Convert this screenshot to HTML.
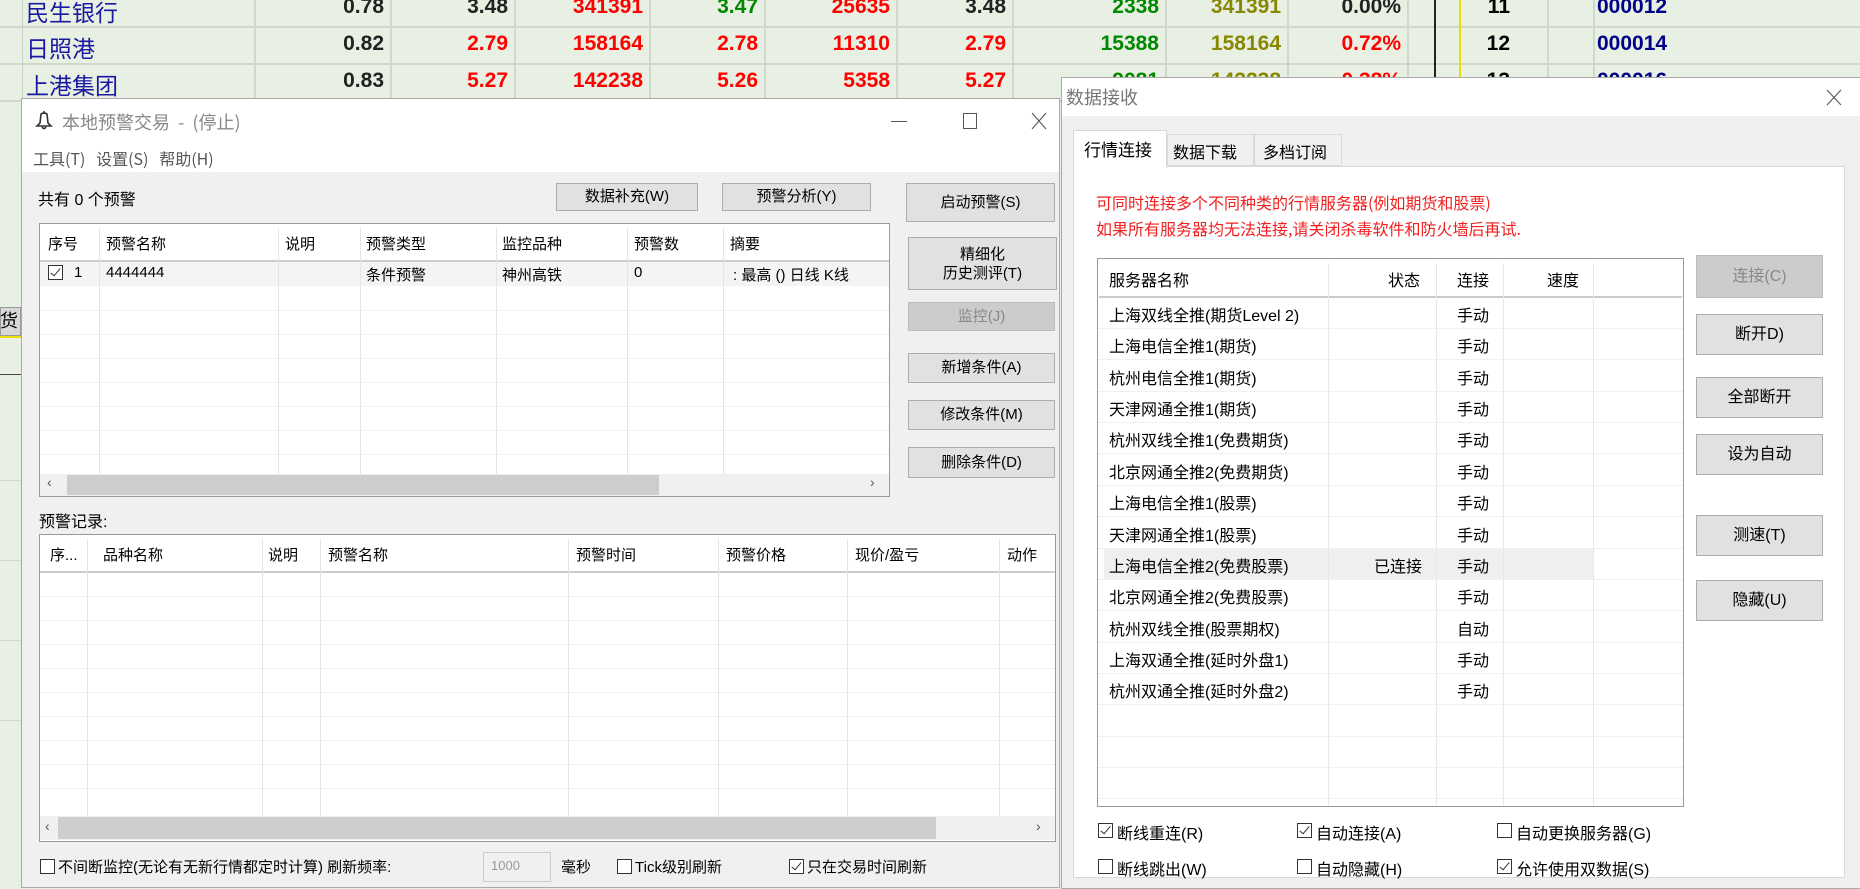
<!DOCTYPE html>
<html><head><meta charset="utf-8">
<style>
*{margin:0;padding:0;box-sizing:border-box}
body{width:1860px;height:886px;overflow:hidden;position:relative;background:#e8f0e4;font-family:"Liberation Sans","Microsoft YaHei","Noto Sans CJK SC",sans-serif}
.a{position:absolute}
.t{position:absolute;white-space:nowrap}
.num{font-family:"Liberation Sans Narrow","Liberation Sans",sans-serif;font-weight:bold;font-size:21px;text-align:right}
.btn{position:absolute;background:#e1e1e1;border:1px solid #adadad;text-align:center;color:#000}
.cb{position:absolute;width:15px;height:15px;border:1px solid #333;background:#fff}
.cb.on::after{content:"";position:absolute;left:4px;top:0px;width:4px;height:9px;border-right:1.5px solid #333;border-bottom:1.5px solid #333;transform:rotate(40deg)}
.vl{position:absolute;width:1px;background:#f0f0f0}
.hl{position:absolute;height:1px;background:#f0f0f0}
.L{font-family:"Liberation Sans","Noto Sans CJK SC",sans-serif;font-size:15px}
</style></head><body>

<!-- background stock table -->
<div class="a" style="left:0;top:26px;width:1860px;height:2px;background:#d0d8cc"></div>
<div class="a" style="left:0;top:63px;width:1860px;height:2px;background:#d0d8cc"></div>
<div class="a" style="left:0;top:100px;width:1860px;height:2px;background:#d0d8cc"></div>
<div class="a" style="left:22px;top:0;width:1px;height:100px;background:#c8d0c4"></div>
<div class="a" style="left:254px;top:0;width:2px;height:100px;background:#d0d8cc"></div>
<div class="a" style="left:390px;top:0;width:2px;height:100px;background:#d0d8cc"></div>
<div class="a" style="left:514px;top:0;width:2px;height:100px;background:#d0d8cc"></div>
<div class="a" style="left:649px;top:0;width:2px;height:100px;background:#d0d8cc"></div>
<div class="a" style="left:764px;top:0;width:2px;height:100px;background:#d0d8cc"></div>
<div class="a" style="left:896px;top:0;width:2px;height:100px;background:#d0d8cc"></div>
<div class="a" style="left:1012px;top:0;width:2px;height:100px;background:#d0d8cc"></div>
<div class="a" style="left:1165px;top:0;width:2px;height:100px;background:#d0d8cc"></div>
<div class="a" style="left:1287px;top:0;width:2px;height:100px;background:#d0d8cc"></div>
<div class="a" style="left:1407px;top:0;width:2px;height:100px;background:#d0d8cc"></div>
<div class="a" style="left:1434px;top:0;width:2px;height:100px;background:#222"></div>
<div class="a" style="left:1459px;top:0;width:2px;height:100px;background:#e8e000"></div>
<div class="a" style="left:1547px;top:0;width:2px;height:100px;background:#d0d8cc"></div>
<div class="a" style="left:1593px;top:0;width:2px;height:100px;background:#d0d8cc"></div>

<div class="t" style="left:26px;top:-6px;font-size:23px;color:#1a1aa0;font-family:'Noto Sans CJK SC',sans-serif">民生银行</div>
<div class="t" style="left:26px;top:30px;font-size:23px;color:#1a1aa0;font-family:'Noto Sans CJK SC',sans-serif">日照港</div>
<div class="t" style="left:26px;top:67px;font-size:23px;color:#1a1aa0;font-family:'Noto Sans CJK SC',sans-serif">上港集团</div>

<div class="t num" style="left:300px;top:-5px;width:84px;color:#222">0.78</div>
<div class="t num" style="left:420px;top:-5px;width:88px;color:#222">3.48</div>
<div class="t num" style="left:540px;top:-5px;width:103px;color:#f00">341391</div>
<div class="t num" style="left:660px;top:-5px;width:98px;color:#080">3.47</div>
<div class="t num" style="left:780px;top:-5px;width:110px;color:#f00">25635</div>
<div class="t num" style="left:910px;top:-5px;width:96px;color:#222">3.48</div>
<div class="t num" style="left:1040px;top:-5px;width:119px;color:#080">2338</div>
<div class="t num" style="left:1170px;top:-5px;width:111px;color:#880">341391</div>
<div class="t num" style="left:1290px;top:-5px;width:111px;color:#222">0.00%</div>
<div class="t num" style="left:1470px;top:-5px;width:40px;color:#000">11</div>
<div class="t num" style="left:1597px;top:-5px;text-align:left;color:#008">000012</div>

<div class="t num" style="left:300px;top:32px;width:84px;color:#222">0.82</div>
<div class="t num" style="left:420px;top:32px;width:88px;color:#f00">2.79</div>
<div class="t num" style="left:540px;top:32px;width:103px;color:#f00">158164</div>
<div class="t num" style="left:660px;top:32px;width:98px;color:#f00">2.78</div>
<div class="t num" style="left:780px;top:32px;width:110px;color:#f00">11310</div>
<div class="t num" style="left:910px;top:32px;width:96px;color:#f00">2.79</div>
<div class="t num" style="left:1040px;top:32px;width:119px;color:#080">15388</div>
<div class="t num" style="left:1170px;top:32px;width:111px;color:#880">158164</div>
<div class="t num" style="left:1290px;top:32px;width:111px;color:#f00">0.72%</div>
<div class="t num" style="left:1470px;top:32px;width:40px;color:#000">12</div>
<div class="t num" style="left:1597px;top:32px;text-align:left;color:#008">000014</div>

<div class="t num" style="left:300px;top:69px;width:84px;color:#222">0.83</div>
<div class="t num" style="left:420px;top:69px;width:88px;color:#f00">5.27</div>
<div class="t num" style="left:540px;top:69px;width:103px;color:#f00">142238</div>
<div class="t num" style="left:660px;top:69px;width:98px;color:#f00">5.26</div>
<div class="t num" style="left:780px;top:69px;width:110px;color:#f00">5358</div>
<div class="t num" style="left:910px;top:69px;width:96px;color:#f00">5.27</div>
<div class="t num" style="left:1040px;top:69px;width:119px;color:#080">9081</div>
<div class="t num" style="left:1170px;top:69px;width:111px;color:#880">142238</div>
<div class="t num" style="left:1290px;top:69px;width:111px;color:#f00">0.38%</div>
<div class="t num" style="left:1470px;top:69px;width:40px;color:#000">13</div>
<div class="t num" style="left:1597px;top:69px;text-align:left;color:#008">000016</div>

<!-- left edge bits -->
<div class="a" style="left:0;top:307px;width:21px;height:29px;background:#d8d8d8;border:1px solid #999"></div>
<div class="t" style="left:0;top:307px;font-size:18px;color:#000;font-family:'Noto Sans CJK SC',sans-serif">货</div>
<div class="a" style="left:0;top:336px;width:21px;height:2px;background:#e8e000"></div>
<div class="a" style="left:0;top:374px;width:21px;height:1px;background:#444"></div>
<div class="a" style="left:0;top:480px;width:21px;height:1px;background:#d0d8cc"></div>
<div class="a" style="left:0;top:560px;width:21px;height:1px;background:#d0d8cc"></div>
<div class="a" style="left:0;top:640px;width:21px;height:1px;background:#d0d8cc"></div>
<div class="a" style="left:0;top:720px;width:21px;height:1px;background:#d0d8cc"></div>

<!-- LEFT WINDOW -->
<div class="a" style="left:21px;top:98px;width:1039px;height:790px;background:#f0f0f0;border:1px solid #aaa"></div>
<div class="a" style="left:22px;top:99px;width:1037px;height:73px;background:#fff"></div>
<svg class="a" style="left:35px;top:110px" width="18" height="20" viewBox="0 0 18 20"><path d="M9 1 L9 3 M6 4 Q9 2 12 4 L13 13 L16 16 L2 16 L5 13 Z M7 17 Q9 20 11 17" fill="none" stroke="#333" stroke-width="1.6"/></svg>
<div class="t" style="left:62px;top:109px;font-size:18px;color:#888;font-family:'Noto Sans CJK SC',sans-serif">本地预警交易 &nbsp;- &nbsp;(停止)</div>
<div class="a" style="left:891px;top:121px;width:16px;height:1px;background:#555"></div>
<div class="a" style="left:963px;top:113px;width:14px;height:16px;border:1px solid #555"></div>
<svg class="a" style="left:1031px;top:112px" width="16" height="18"><path d="M1 1 L15 17 M15 1 L1 17" stroke="#555" stroke-width="1.1"/></svg>
<div class="t" style="left:33px;top:146px;font-size:16px;color:#555;font-family:'Noto Sans CJK SC',sans-serif">工具(T) &nbsp;&nbsp;设置(S) &nbsp;&nbsp;帮助(H)</div>

<div class="t L" style="left:38px;top:186px;font-size:16px">共有 0 个预警</div>
<div class="btn L" style="left:556px;top:183px;width:142px;height:28px;line-height:26px">数据补充(W)</div>
<div class="btn L" style="left:722px;top:183px;width:149px;height:28px;line-height:26px">预警分析(Y)</div>
<div class="btn L" style="left:906px;top:183px;width:149px;height:39px;line-height:37px">启动预警(S)</div>
<div class="btn L" style="left:908px;top:237px;width:149px;height:53px;line-height:19px;padding-top:7px">精细化<br>历史测评(T)</div>
<div class="btn L" style="left:908px;top:302px;width:147px;height:29px;line-height:27px;background:#ccc;border-color:#bbb;color:#888">监控(J)</div>
<div class="btn L" style="left:908px;top:353px;width:147px;height:30px;line-height:28px">新增条件(A)</div>
<div class="btn L" style="left:908px;top:400px;width:147px;height:30px;line-height:28px">修改条件(M)</div>
<div class="btn L" style="left:908px;top:447px;width:147px;height:31px;line-height:29px">删除条件(D)</div>

<!-- top list -->
<div class="a" style="left:39px;top:223px;width:851px;height:274px;background:#fff;border:1px solid #999"></div>
<div class="a" style="left:40px;top:260px;width:849px;height:2px;background:#ccc"></div>
<div class="a" style="left:40px;top:262px;width:849px;height:24px;background:#f4f4f4"></div>
<div class="vl" style="left:99px;top:228px;height:246px;background:#e4e4e4"></div>
<div class="vl" style="left:278px;top:228px;height:246px;background:#e4e4e4"></div>
<div class="vl" style="left:360px;top:228px;height:246px;background:#e4e4e4"></div>
<div class="vl" style="left:496px;top:228px;height:246px;background:#e4e4e4"></div>
<div class="vl" style="left:627px;top:228px;height:246px;background:#e4e4e4"></div>
<div class="vl" style="left:723px;top:228px;height:246px;background:#e4e4e4"></div>
<div class="hl" style="left:40px;top:310px;width:849px"></div>
<div class="hl" style="left:40px;top:334px;width:849px"></div>
<div class="hl" style="left:40px;top:358px;width:849px"></div>
<div class="hl" style="left:40px;top:382px;width:849px"></div>
<div class="hl" style="left:40px;top:406px;width:849px"></div>
<div class="hl" style="left:40px;top:430px;width:849px"></div>
<div class="hl" style="left:40px;top:454px;width:849px"></div>
<div class="t L" style="left:48px;top:233px">序号</div>
<div class="t L" style="left:106px;top:233px">预警名称</div>
<div class="t L" style="left:285px;top:233px">说明</div>
<div class="t L" style="left:366px;top:233px">预警类型</div>
<div class="t L" style="left:502px;top:233px">监控品种</div>
<div class="t L" style="left:634px;top:233px">预警数</div>
<div class="t L" style="left:730px;top:233px">摘要</div>
<div class="cb on" style="left:48px;top:265px"></div>
<div class="t L" style="left:74px;top:264px">1</div>
<div class="t L" style="left:106px;top:264px">4444444</div>
<div class="t L" style="left:366px;top:264px">条件预警</div>
<div class="t L" style="left:502px;top:264px">神州高铁</div>
<div class="t L" style="left:634px;top:264px">0</div>
<div class="t L" style="left:733px;top:264px;width:156px;overflow:hidden">: 最高 () 日线 K线</div>
<div class="a" style="left:40px;top:474px;width:849px;height:22px;background:#f0f0f0"></div>
<div class="a" style="left:67px;top:475px;width:592px;height:20px;background:#cdcdcd"></div>
<div class="t" style="left:47px;top:474px;font-size:14px;color:#555">‹</div>
<div class="t" style="left:870px;top:474px;font-size:14px;color:#555">›</div>

<div class="t L" style="left:39px;top:508px;font-size:16px">预警记录:</div>

<!-- bottom list -->
<div class="a" style="left:39px;top:534px;width:1017px;height:308px;background:#fff;border:1px solid #999"></div>
<div class="a" style="left:40px;top:571px;width:1015px;height:2px;background:#ccc"></div>
<div class="vl" style="left:87px;top:539px;height:277px;background:#e4e4e4"></div>
<div class="vl" style="left:262px;top:539px;height:277px;background:#e4e4e4"></div>
<div class="vl" style="left:320px;top:539px;height:277px;background:#e4e4e4"></div>
<div class="vl" style="left:568px;top:539px;height:277px;background:#e4e4e4"></div>
<div class="vl" style="left:718px;top:539px;height:277px;background:#e4e4e4"></div>
<div class="vl" style="left:847px;top:539px;height:277px;background:#e4e4e4"></div>
<div class="vl" style="left:999px;top:539px;height:277px;background:#e4e4e4"></div>
<div class="hl" style="left:40px;top:596px;width:1015px"></div>
<div class="hl" style="left:40px;top:620px;width:1015px"></div>
<div class="hl" style="left:40px;top:644px;width:1015px"></div>
<div class="hl" style="left:40px;top:668px;width:1015px"></div>
<div class="hl" style="left:40px;top:692px;width:1015px"></div>
<div class="hl" style="left:40px;top:716px;width:1015px"></div>
<div class="hl" style="left:40px;top:740px;width:1015px"></div>
<div class="hl" style="left:40px;top:764px;width:1015px"></div>
<div class="hl" style="left:40px;top:788px;width:1015px"></div>
<div class="t L" style="left:50px;top:544px">序...</div>
<div class="t L" style="left:103px;top:544px">品种名称</div>
<div class="t L" style="left:268px;top:544px">说明</div>
<div class="t L" style="left:328px;top:544px">预警名称</div>
<div class="t L" style="left:576px;top:544px">预警时间</div>
<div class="t L" style="left:726px;top:544px">预警价格</div>
<div class="t L" style="left:855px;top:544px">现价/盈亏</div>
<div class="t L" style="left:1007px;top:544px">动作</div>
<div class="a" style="left:40px;top:816px;width:1015px;height:24px;background:#f0f0f0"></div>
<div class="a" style="left:58px;top:817px;width:878px;height:22px;background:#cdcdcd"></div>
<div class="t" style="left:45px;top:818px;font-size:14px;color:#555">‹</div>
<div class="t" style="left:1036px;top:818px;font-size:14px;color:#555">›</div>

<div class="cb" style="left:40px;top:859px"></div>
<div class="t L" style="left:58px;top:856px">不间断监控(无论有无新行情都定时计算) 刷新频率:</div>
<div class="a" style="left:483px;top:852px;width:68px;height:30px;background:#f0f0f0;border:1px solid #ccc"></div>
<div class="t" style="left:491px;top:858px;font-size:13px;color:#999">1000</div>
<div class="t L" style="left:561px;top:856px">毫秒</div>
<div class="cb" style="left:617px;top:859px"></div>
<div class="t L" style="left:635px;top:856px">Tick级别刷新</div>
<div class="cb on" style="left:789px;top:859px"></div>
<div class="t L" style="left:807px;top:856px">只在交易时间刷新</div>

<!-- RIGHT WINDOW -->
<div class="a" style="left:1061px;top:77px;width:800px;height:812px;background:#f0f0f0;border:1px solid #aaa"></div>
<div class="a" style="left:1062px;top:78px;width:798px;height:38px;background:#fff"></div>
<div class="t" style="left:1066px;top:84px;font-size:18px;color:#777;font-family:'Noto Sans CJK SC',sans-serif">数据接收</div>
<svg class="a" style="left:1826px;top:89px" width="16" height="17"><path d="M1 1 L15 16 M15 1 L1 16" stroke="#555" stroke-width="1.1"/></svg>

<div class="a" style="left:1073px;top:166px;width:772px;height:712px;background:#fff;border:1px solid #d9d9d9"></div>
<div class="a" style="left:1073px;top:130px;width:94px;height:38px;background:#fff;border:1px solid #d9d9d9;border-bottom:none"></div>
<div class="a" style="left:1167px;top:134px;width:87px;height:32px;background:#f0f0f0;border:1px solid #d9d9d9"></div>
<div class="a" style="left:1254px;top:134px;width:88px;height:32px;background:#f0f0f0;border:1px solid #d9d9d9"></div>
<div class="t" style="left:1084px;top:136px;font-size:17px;color:#000;font-family:'Noto Sans CJK SC',sans-serif">行情连接</div>
<div class="t" style="left:1173px;top:139px;font-size:16px;color:#000;font-family:'Noto Sans CJK SC',sans-serif">数据下载</div>
<div class="t" style="left:1263px;top:139px;font-size:16px;color:#000;font-family:'Noto Sans CJK SC',sans-serif">多档订阅</div>

<div class="t" style="left:1096px;top:190px;font-size:16px;color:#f02020;font-family:'Noto Sans CJK SC',sans-serif">可同时连接多个不同种类的行情服务器(例如期货和股票)</div>
<div class="t" style="left:1096px;top:216px;font-size:16px;color:#f02020;font-family:'Noto Sans CJK SC',sans-serif">如果所有服务器均无法连接,请关闭杀毒软件和防火墙后再试.</div>

<!-- server list -->
<div class="a" style="left:1097px;top:258px;width:587px;height:549px;background:#fff;border:1px solid #999"></div>
<div class="a" style="left:1099px;top:296px;width:583px;height:2px;background:#ccc"></div>
<div class="a" style="left:1104px;top:549px;width:489px;height:31px;background:#efefef"></div>
<div class="vl" style="left:1328px;top:263px;height:543px;background:#e8e8e8"></div>
<div class="vl" style="left:1436px;top:263px;height:543px;background:#e8e8e8"></div>
<div class="vl" style="left:1503px;top:263px;height:543px;background:#e8e8e8"></div>
<div class="vl" style="left:1593px;top:263px;height:543px;background:#e8e8e8"></div>
<div class="hl" style="left:1098px;top:328px;width:585px"></div>
<div class="hl" style="left:1098px;top:359px;width:585px"></div>
<div class="hl" style="left:1098px;top:391px;width:585px"></div>
<div class="hl" style="left:1098px;top:422px;width:585px"></div>
<div class="hl" style="left:1098px;top:453px;width:585px"></div>
<div class="hl" style="left:1098px;top:485px;width:585px"></div>
<div class="hl" style="left:1098px;top:516px;width:585px"></div>
<div class="hl" style="left:1098px;top:548px;width:585px"></div>
<div class="hl" style="left:1098px;top:579px;width:585px"></div>
<div class="hl" style="left:1098px;top:610px;width:585px"></div>
<div class="hl" style="left:1098px;top:642px;width:585px"></div>
<div class="hl" style="left:1098px;top:673px;width:585px"></div>
<div class="hl" style="left:1098px;top:704px;width:585px"></div>
<div class="hl" style="left:1098px;top:736px;width:585px"></div>
<div class="hl" style="left:1098px;top:767px;width:585px"></div>
<div class="hl" style="left:1098px;top:798px;width:585px"></div>

<div style="position:absolute;left:0;top:0;font-size:16px;font-family:'Liberation Sans','Noto Sans CJK SC',sans-serif;color:#000">
<div class="t" style="left:1109px;top:267px">服务器名称</div>
<div class="t" style="left:1388px;top:267px">状态</div>
<div class="t" style="left:1457px;top:267px">连接</div>
<div class="t" style="left:1547px;top:267px">速度</div>

<div class="t" style="left:1109px;top:302px">上海双线全推(期货Level 2)</div><div class="t" style="left:1457px;top:302px">手动</div>
<div class="t" style="left:1109px;top:333px">上海电信全推1(期货)</div><div class="t" style="left:1457px;top:333px">手动</div>
<div class="t" style="left:1109px;top:365px">杭州电信全推1(期货)</div><div class="t" style="left:1457px;top:365px">手动</div>
<div class="t" style="left:1109px;top:396px">天津网通全推1(期货)</div><div class="t" style="left:1457px;top:396px">手动</div>
<div class="t" style="left:1109px;top:427px">杭州双线全推1(免费期货)</div><div class="t" style="left:1457px;top:427px">手动</div>
<div class="t" style="left:1109px;top:459px">北京网通全推2(免费期货)</div><div class="t" style="left:1457px;top:459px">手动</div>
<div class="t" style="left:1109px;top:490px">上海电信全推1(股票)</div><div class="t" style="left:1457px;top:490px">手动</div>
<div class="t" style="left:1109px;top:522px">天津网通全推1(股票)</div><div class="t" style="left:1457px;top:522px">手动</div>
<div class="t" style="left:1109px;top:553px">上海电信全推2(免费股票)</div><div class="t" style="left:1374px;top:553px">已连接</div><div class="t" style="left:1457px;top:553px">手动</div>
<div class="t" style="left:1109px;top:584px">北京网通全推2(免费股票)</div><div class="t" style="left:1457px;top:584px">手动</div>
<div class="t" style="left:1109px;top:616px">杭州双线全推(股票期权)</div><div class="t" style="left:1457px;top:616px">自动</div>
<div class="t" style="left:1109px;top:647px">上海双通全推(延时外盘1)</div><div class="t" style="left:1457px;top:647px">手动</div>
<div class="t" style="left:1109px;top:678px">杭州双通全推(延时外盘2)</div><div class="t" style="left:1457px;top:678px">手动</div>
</div>

<div class="btn" style="left:1696px;top:255px;width:127px;height:43px;line-height:41px;font-size:16px;background:#ccc;border-color:#bbb;color:#888">连接(C)</div>
<div class="btn" style="left:1696px;top:314px;width:127px;height:41px;line-height:39px;font-size:16px">断开D)</div>
<div class="btn" style="left:1696px;top:377px;width:127px;height:41px;line-height:39px;font-size:16px">全部断开</div>
<div class="btn" style="left:1696px;top:434px;width:127px;height:41px;line-height:39px;font-size:16px">设为自动</div>
<div class="btn" style="left:1696px;top:515px;width:127px;height:41px;line-height:39px;font-size:16px">测速(T)</div>
<div class="btn" style="left:1696px;top:580px;width:127px;height:41px;line-height:39px;font-size:16px">隐藏(U)</div>

<div style="position:absolute;left:0;top:0;font-size:16px;font-family:'Liberation Sans','Noto Sans CJK SC',sans-serif">
<div class="cb on" style="left:1098px;top:823px"></div><div class="t" style="left:1117px;top:820px">断线重连(R)</div>
<div class="cb on" style="left:1297px;top:823px"></div><div class="t" style="left:1316px;top:820px">自动连接(A)</div>
<div class="cb" style="left:1497px;top:823px"></div><div class="t" style="left:1516px;top:820px">自动更换服务器(G)</div>
<div class="cb" style="left:1098px;top:859px"></div><div class="t" style="left:1117px;top:856px">断线跳出(W)</div>
<div class="cb" style="left:1297px;top:859px"></div><div class="t" style="left:1316px;top:856px">自动隐藏(H)</div>
<div class="cb on" style="left:1497px;top:859px"></div><div class="t" style="left:1516px;top:856px">允许使用双数据(S)</div>
</div>
</body></html>
